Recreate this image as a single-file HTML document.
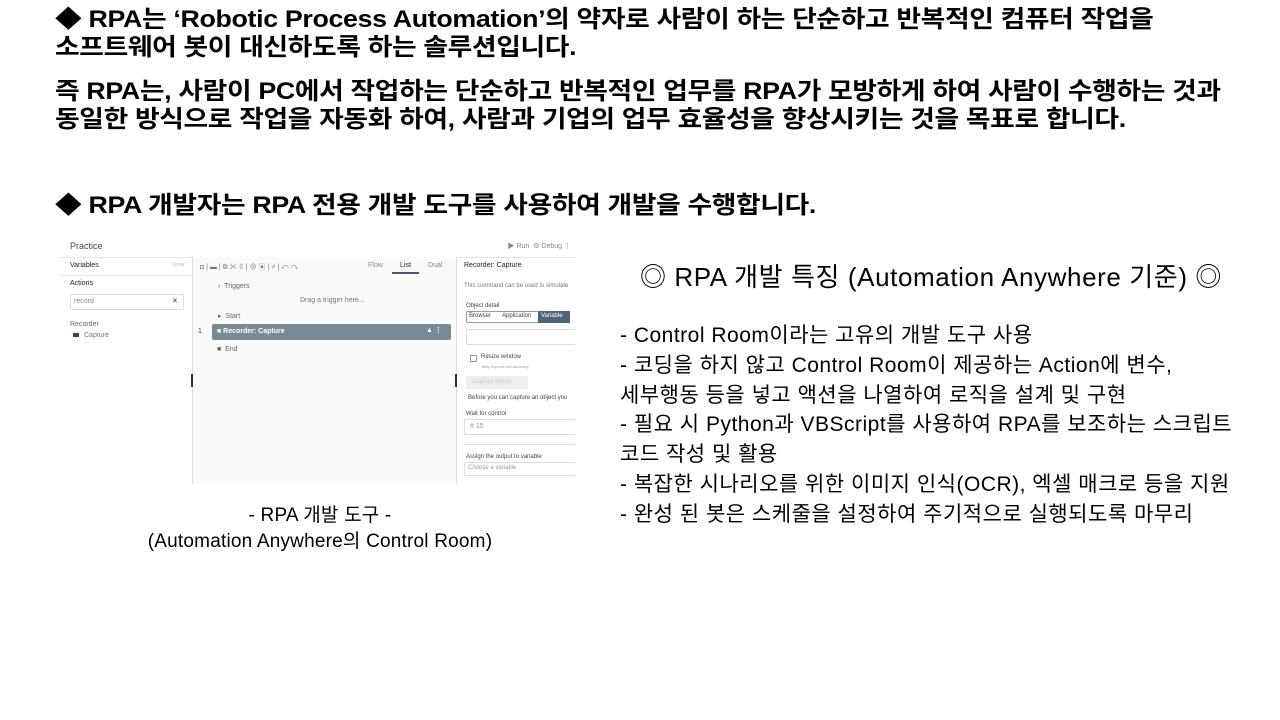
<!DOCTYPE html>
<html><head><meta charset="utf-8"><style>
*{margin:0;padding:0;box-sizing:border-box}
body{width:1280px;height:720px;background:#fff;position:relative;overflow:hidden;font-family:"Liberation Sans","Noto Sans CJK KR",sans-serif;color:#000}
.b{position:absolute;left:55px;font-weight:bold;font-size:24px;line-height:28px;white-space:nowrap;letter-spacing:-0.3px;transform:scaleX(1.115);transform-origin:0 0}
.r{position:absolute;white-space:nowrap}
.ss{position:absolute;left:60px;top:237px;width:515px;height:247px;background:#fff;font-size:7px;color:#444;overflow:hidden}
.ss div{position:absolute;white-space:nowrap}
</style></head><body>
<div class="b" style="top:6px">◆ RPA는 ‘Robotic Process Automation’의 약자로 사람이 하는 단순하고 반복적인 컴퓨터 작업을<br>소프트웨어 봇이 대신하도록 하는 솔루션입니다.</div>
<div class="b" style="top:78px">즉 RPA는, 사람이 PC에서 작업하는 단순하고 반복적인 업무를 RPA가 모방하게 하여 사람이 수행하는 것과<br>동일한 방식으로 작업을 자동화 하여, 사람과 기업의 업무 효율성을 향상시키는 것을 목표로 합니다.</div>
<div class="b" style="top:192px">◆ RPA 개발자는 RPA 전용 개발 도구를 사용하여 개발을 수행합니다.</div>

<div class="ss">
<div style="left:10px;top:4px;font-size:9px">Practice</div>
<div style="right:4px;top:4px;color:#888">▶ Run &nbsp;⚙ Debug ⋮</div>
<div style="left:0;top:20px;width:515px;height:1px;background:#e5e5e5"></div>
<div style="left:132px;top:20px;width:264px;height:227px;background:#fafafb"></div>
<div style="left:132px;top:20px;width:1px;height:227px;background:#ddd"></div>
<div style="left:396px;top:20px;width:1px;height:227px;background:#ddd"></div>
<div style="left:0;top:38px;width:132px;height:1px;background:#e5e5e5"></div>
<div style="left:10px;top:25px;color:#222">Variables</div><div style="left:112px;top:25px;color:#bbb;font-size:5px">Show</div>
<div style="left:10px;top:43px;color:#222">Actions</div>
<div style="left:10px;top:57px;width:114px;height:16px;border:1px solid #ddd;border-radius:2px"></div>
<div style="left:14px;top:61px;color:#888">record</div><div style="left:112px;top:60px">✕</div>
<div style="left:10px;top:84px;color:#666">Recorder</div>
<div style="left:13px;top:96px;width:6px;height:4px;background:#345"></div><div style="left:24px;top:95px;color:#777">Capture</div>
<div style="left:140px;top:25px;color:#777">◘ | ▬ | ⧉ ✂ ▯ | ⊕ ▣ | ⌿ | ↶ ↷</div>
<div style="left:308px;top:25px;color:#888">Flow</div><div style="left:340px;top:25px;color:#222">List</div><div style="left:368px;top:25px;color:#888">Dual</div>
<div style="left:332px;top:35px;width:27px;height:2px;background:#557"></div>
<div style="left:158px;top:46px;color:#666">› &nbsp;Triggers</div>
<div style="left:240px;top:60px;color:#777">Drag a trigger here...</div>
<div style="left:158px;top:75px;color:#666">▸ &nbsp;Start</div>
<div style="left:138px;top:91px">1</div>
<div style="left:152px;top:87px;width:239px;height:16px;background:#7a8a95;border-radius:2px"></div>
<div style="left:157px;top:91px;color:#fff;font-weight:bold">■ Recorder: Capture</div><div style="left:366px;top:89px;color:#fff;font-weight:bold">▲ ⋮</div>
<div style="left:157px;top:109px;color:#666">■ &nbsp;End</div>
<div style="left:131px;top:137px;width:2px;height:13px;background:#234"></div>
<div style="left:395px;top:137px;width:2px;height:13px;background:#234"></div>
<div style="left:404px;top:25px;color:#222">Recorder: Capture</div>
<div style="left:404px;top:46px;color:#777;font-size:6px">This command can be used to simulate</div>
<div style="left:406px;top:66px;font-size:6px">Object detail</div>
<div style="left:406px;top:74px;width:104px;height:12px;border:1px solid #999;border-radius:2px"></div>
<div style="left:409px;top:76px;font-size:6px">Browser</div><div style="left:442px;top:76px;font-size:6px">Application</div>
<div style="left:478px;top:74px;width:32px;height:12px;background:#4e6478"></div><div style="left:481px;top:76px;font-size:6px;color:#fff">Variable</div>
<div style="left:406px;top:92px;width:110px;height:16px;border:1px solid #ddd"></div>
<div style="left:410px;top:118px;width:7px;height:7px;border:1px solid #999"></div><div style="left:421px;top:117px;font-size:6px">Resize window</div>
<div style="left:422px;top:127px;font-size:4px;color:#999">May improve bot accuracy</div>
<div style="left:406px;top:139px;width:62px;height:13px;background:#eee"></div><div style="left:412px;top:142px;font-size:6px;color:#ccc">Capture object</div>
<div style="left:408px;top:158px;font-size:6px">Before you can capture an object you</div>
<div style="left:406px;top:174px;font-size:6px">Wait for control</div>
<div style="left:404px;top:182px;width:112px;height:16px;border:1px solid #ddd"></div><div style="left:410px;top:186px;color:#999">#  15</div>
<div style="left:404px;top:207px;width:112px;height:1px;background:#ddd"></div>
<div style="left:406px;top:217px;font-size:6px">Assign the output to variable</div>
<div style="left:404px;top:225px;width:112px;height:14px;border:1px solid #ddd"></div><div style="left:408px;top:228px;font-size:6px;color:#999;font-style:italic">Choose a variable</div>
</div>

<div class="r" style="left:0;width:640px;text-align:center;top:503px;font-size:19px;line-height:26px;letter-spacing:0.2px">- RPA 개발 도구 -<br>(Automation Anywhere의 Control Room)</div>
<div class="r" style="left:640px;top:261px;font-size:26px;line-height:32px;letter-spacing:0.6px">◎ RPA 개발 특징 (Automation Anywhere 기준) ◎</div>
<div class="r" style="left:620px;top:321px;font-size:21px;line-height:29.8px;letter-spacing:0.5px">- Control Room이라는 고유의 개발 도구 사용<br>- 코딩을 하지 않고 Control Room이 제공하는 Action에 변수,<br>세부행동 등을 넣고 액션을 나열하여 로직을 설계 및 구현<br>- 필요 시 Python과 VBScript를 사용하여 RPA를 보조하는 스크립트<br>코드 작성 및 활용<br>- 복잡한 시나리오를 위한 이미지 인식(OCR), 엑셀 매크로 등을 지원<br>- 완성 된 봇은 스케줄을 설정하여 주기적으로 실행되도록 마무리</div>
</body></html>
